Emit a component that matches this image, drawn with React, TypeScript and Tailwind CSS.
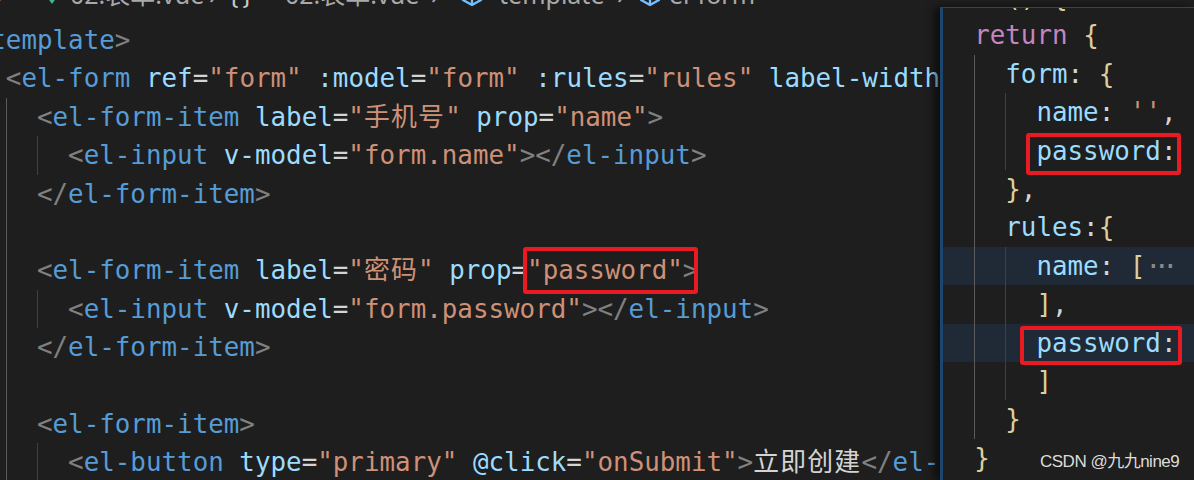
import React from "react"

type Tok = { c: string; t: string; cjk?: boolean; box?: string }

const tk = (c: string, t: string, cjk?: boolean): Tok => ({ c, t, cjk })
const boxed = (c: string, t: string, box: string): Tok => ({ c, t, box })

// editor token colours (Dark+ look)
const P = "text-[#808080]"
const TAG = "text-[#569cd6]"
const ATTR = "text-[#9cdcfe]"
const EQ = "text-[#d4d4d4]"
const STR = "text-[#ce9178]"
const TXT = "text-[#d4d4d4]"
const KW = "text-[#c586c0]"
const FN = "text-[#dcdcaa]"
const BR = "text-[#dccf9c]"
const DIM = "text-[#8b8b8b] tracking-[-7px]"
const SP = tk("", " ")

const NO = ""
const G1 = "border-l border-[#5a5a5a]"
const G2 = "border-l border-[#404040]"

const BOX_MAIN = "relative inline-block -my-[4px] border-[4px] border-[#e81b23] rounded-[3px] -ml-[4px] pr-[11px] -mr-[15px]"
const BOX_P1 = "relative inline-block leading-[28.4px] pb-[5.6px] -mb-[5px] border-[4px] border-[#e81b23] rounded-[3px] -ml-[10px] pl-[6px] -mr-[4px]"
const BOX_P2 = "relative inline-block leading-[26.4px] pb-[4.6px] -mb-[3px] border-[4px] border-[#e81b23] rounded-[3px] -ml-[16px] pl-[12px] pr-[1.5px] -mr-[5.5px]"

type Line = { g: string[]; toks: Tok[]; hl?: boolean }

const mainLines: Line[] = [
  { g: [], toks: [tk(P, "<"), tk(TAG, "template"), tk(P, ">")] },
  {
    g: [NO],
    toks: [
      tk(P, "<"), tk(TAG, "el-form"), SP, tk(ATTR, "ref"), tk(EQ, "="), tk(STR, "\"form\""), SP,
      tk(ATTR, ":model"), tk(EQ, "="), tk(STR, "\"form\""), SP, tk(ATTR, ":rules"), tk(EQ, "="),
      tk(STR, "\"rules\""), SP, tk(ATTR, "label-width"), tk(EQ, "="), tk(STR, "\"80px\""), tk(P, ">"),
    ],
  },
  {
    g: [NO, G1],
    toks: [
      tk(P, "<"), tk(TAG, "el-form-item"), SP, tk(ATTR, "label"), tk(EQ, "="), tk(STR, "\""),
      tk(STR, "手机号", true), tk(STR, "\""), SP, tk(ATTR, "prop"), tk(EQ, "="), tk(STR, "\"name\""), tk(P, ">"),
    ],
  },
  {
    g: [NO, G1, G2],
    toks: [
      tk(P, "<"), tk(TAG, "el-input"), SP, tk(ATTR, "v-model"), tk(EQ, "="), tk(STR, "\"form.name\""),
      tk(P, "></"), tk(TAG, "el-input"), tk(P, ">"),
    ],
  },
  { g: [NO, G1], toks: [tk(P, "</"), tk(TAG, "el-form-item"), tk(P, ">")] },
  { g: [NO, G1], toks: [] },
  {
    g: [NO, G1],
    toks: [
      tk(P, "<"), tk(TAG, "el-form-item"), SP, tk(ATTR, "label"), tk(EQ, "="), tk(STR, "\""),
      tk(STR, "密码", true), tk(STR, "\""), SP, tk(ATTR, "prop"), tk(EQ, "="),
      boxed(STR, "\"password\"", BOX_MAIN), tk(P, ">"),
    ],
  },
  {
    g: [NO, G1, G2],
    toks: [
      tk(P, "<"), tk(TAG, "el-input"), SP, tk(ATTR, "v-model"), tk(EQ, "="), tk(STR, "\"form.password\""),
      tk(P, "></"), tk(TAG, "el-input"), tk(P, ">"),
    ],
  },
  { g: [NO, G1], toks: [tk(P, "</"), tk(TAG, "el-form-item"), tk(P, ">")] },
  { g: [NO, G1], toks: [] },
  { g: [NO, G1], toks: [tk(P, "<"), tk(TAG, "el-form-item"), tk(P, ">")] },
  {
    g: [NO, G1, G2],
    toks: [
      tk(P, "<"), tk(TAG, "el-button"), SP, tk(ATTR, "type"), tk(EQ, "="), tk(STR, "\"primary\""), SP,
      tk(ATTR, "@click"), tk(EQ, "="), tk(STR, "\"onSubmit\""), tk(P, ">"), tk(TXT, "立即创建", true),
      tk(P, "</"), tk(TAG, "el-button"), tk(P, ">"),
    ],
  },
]

const peekLines: Line[] = [
  { g: [], toks: [tk(FN, "data"), tk(BR, "()"), SP, tk(BR, "{")] },
  { g: [NO], toks: [tk(KW, "return"), SP, tk(BR, "{")] },
  { g: [NO, G1], toks: [tk(ATTR, "form"), tk(TXT, ":"), SP, tk(BR, "{")] },
  { g: [NO, G1, G2], toks: [tk(ATTR, "name"), tk(TXT, ":"), SP, tk(STR, "''"), tk(TXT, ",")] },
  { g: [NO, G1, G2], toks: [boxed(ATTR, "password:", BOX_P1), SP, tk(STR, "''"), tk(TXT, ",")] },
  { g: [NO, G1], toks: [tk(BR, "}"), tk(TXT, ",")] },
  { g: [NO, G1], toks: [tk(ATTR, "rules"), tk(TXT, ":"), tk(BR, "{")] },
  { g: [NO, G1, G2], hl: true, toks: [tk(ATTR, "name"), tk(TXT, ":"), SP, tk(BR, "["), tk(DIM, "···")] },
  { g: [NO, G1, G2], toks: [tk(BR, "]"), tk(TXT, ",")] },
  { g: [NO, G1, G2], hl: true, toks: [boxed(ATTR, "password:", BOX_P2), SP, tk(BR, "[")] },
  { g: [NO, G1, G2], toks: [tk(BR, "]")] },
  { g: [NO, G1], toks: [tk(BR, "}")] },
  { g: [NO], toks: [tk(BR, "}")] },
]

function CodeLine({ line }: { line: Line }) {
  return (
    <div className={`h-[38.4px] whitespace-pre ${line.hl ? "bg-[#1f2a36]" : ""}`}>
      {line.g.map((g, i) => (
        <span key={i} className={`inline-block h-[38.4px] w-[31.14px] align-top ${g}`} />
      ))}
      {line.toks.map((t, i) => {
        if (t.box) {
          return (
            <span key={i} className={t.box}>
              {t.t === "password:" ? (
                <>
                  <span className={ATTR}>password</span>
                  <span className={TXT}>:</span>
                </>
              ) : (
                <span className={t.c}>{t.t}</span>
              )}
            </span>
          )
        }
        return (
          <span key={i} className={`${t.c} ${t.cjk ? "tracking-[1.2px]" : ""}`}>
            {t.t}
          </span>
        )
      })}
    </div>
  )
}

function Chevron() {
  return <span className="text-[#a9a9a9]">›</span>
}

function Cube() {
  return (
    <svg width="22" height="24" viewBox="0 0 22 24" fill="none" stroke="#75beff" strokeWidth="2.4" strokeLinejoin="round">
      <path d="M11 2 L20 7 L20 17 L11 22 L2 17 L2 7 Z" />
      <path d="M2 7 L11 12 L20 7 M11 12 L11 22" />
    </svg>
  )
}

function Breadcrumb() {
  return (
    <div className="h-[21px] overflow-hidden shrink-0">
      <div className="-mt-[18px] -ml-[4px] flex items-center h-[25px] text-[25px] leading-[25px] text-[#a9a9a9] font-['Noto_Sans','Noto_Sans_CJK_SC',sans-serif] whitespace-nowrap">
        <span className="w-[50px] shrink-0"><Chevron /></span>
        <span className="w-[24px] shrink-0 flex items-end h-[25px]">
          <svg width="12" height="25" viewBox="0 0 12 25">
            <path d="M1 15 L11 15 L6 22 Z" fill="#41b883" />
          </svg>
        </span>
        <span className="w-[139px] shrink-0">02.表单.vue</span>
        <span className="w-[20px] shrink-0"><Chevron /></span>
        <span className="w-[56px] shrink-0 tracking-[4px] text-[#c8c8c8]">{"{}"}</span>
        <span className="w-[146px] shrink-0">02.表单.vue</span>
        <span className="w-[30px] shrink-0"><Chevron /></span>
        <span className="w-[38px] shrink-0 flex"><Cube /></span>
        <span className="w-[118px] shrink-0">template</span>
        <span className="w-[22px] shrink-0"><Chevron /></span>
        <span className="w-[30px] shrink-0 flex"><Cube /></span>
        <span className="shrink-0">el-form</span>
      </div>
    </div>
  )
}

export default function App() {
  return (
    <div className="relative w-[1194px] h-[480px] overflow-hidden bg-[#1e1e1e] flex">
      <div className="w-[940px] shrink-0 flex flex-col overflow-hidden">
        <Breadcrumb />
        <div className="-ml-[25.3px] font-['DejaVu_Sans_Mono','Noto_Sans_CJK_SC',monospace] text-[25.86px] leading-[38.4px]">
          {mainLines.map((l, i) => (
            <CodeLine key={i} line={l} />
          ))}
        </div>
      </div>

      <div className="flex-1 mt-[7px] border-l-[3px] border-l-[#1c4670] border-t border-t-[#3b4350] bg-[#1e1e1e] overflow-hidden shadow-[-6px_0_8px_rgba(0,0,0,0.55)]">
        <div className="-mt-[30px] font-['DejaVu_Sans_Mono','Noto_Sans_CJK_SC',monospace] text-[25.86px] leading-[38.4px]">
          {peekLines.map((l, i) => (
            <CodeLine key={i} line={l} />
          ))}
        </div>
      </div>

      <div className="absolute left-[1040px] top-[452px] text-[17px] leading-[20px] tracking-[-0.5px] text-[#dcdcdc] font-['Liberation_Sans','Noto_Sans_CJK_SC',sans-serif] whitespace-nowrap">
        CSDN @九九nine9
      </div>
    </div>
  )
}
